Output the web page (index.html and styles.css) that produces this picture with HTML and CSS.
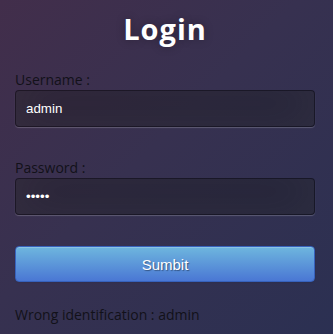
FILE: index.html
```html
<!DOCTYPE html>
<html>
<head>
<meta charset="utf-8">
<link rel="stylesheet" href="styles.css">
</head>
<body>
<div class="login">
  <h1 class="title">Login</h1>
  <form class="form">
    <label class="label">Username :</label>
    <input class="field" type="text" value="admin">
    <label class="label label-pass">Password :</label>
    <input class="field" type="password" value="admin">
    <button class="btn" type="button">Sumbit</button>
  </form>
  <p class="error">Wrong identification : admin</p>
</div>
</body>
</html>
```
FILE: styles.css
```css
html, body {
  margin: 0;
  height: 100%;
}
body {
  background: linear-gradient(135deg, #422e4b 0%, #373150 45%, #2b3052 100%);
  font-family: "Open Sans", sans-serif;
  padding: 11px 0 0 15px;
  box-sizing: border-box;
  overflow: hidden;
}
.login {
  width: 300px;
  display: flex;
  flex-direction: column;
}
.title {
  margin: 0;
  font-size: 29px;
  line-height: 36px;
  font-weight: 700;
  color: #fff;
  text-align: center;
  letter-spacing: 1px;
  text-shadow: 0 0 10px rgba(0,0,0,0.3);
}
.form {
  display: flex;
  flex-direction: column;
  margin-top: 24px;
}
.label {
  font-size: 14px;
  line-height: 18px;
  color: #121119;
  margin-bottom: 1px;
}
.label-pass {
  margin-top: 32px;
}
.field {
  box-sizing: border-box;
  height: 37px;
  width: 300px;
  margin: 0;
  padding: 0 10px;
  border: 1px solid rgba(0,0,0,0.3);
  border-radius: 4px;
  background: rgba(0,0,0,0.3);
  color: #fff;
  font-family: "Liberation Sans", Arial, sans-serif;
  font-size: 13.333px;
  box-shadow: inset 0 -5px 45px rgba(100,100,100,0.2), 0 1px 1px rgba(255,255,255,0.2);
  outline: none;
}
.btn {
  box-sizing: border-box;
  margin-top: 31px;
  height: 36px;
  width: 300px;
  border: 1px solid #3762bc;
  border-radius: 4px;
  background: linear-gradient(#6eb6de, #4a77d4);
  color: #fff;
  font-family: "Liberation Sans", Arial, sans-serif;
  font-size: 15px;
  text-shadow: 1px 1px 1px rgba(0,0,0,0.4);
  box-shadow: inset 0 1px 0 rgba(255,255,255,0.2), 0 1px 2px rgba(0,0,0,0.05);
  padding: 1px 0 0;
}
.error {
  margin: 24px 0 0;
  font-size: 14px;
  line-height: 18px;
  color: #121119;
}
```
